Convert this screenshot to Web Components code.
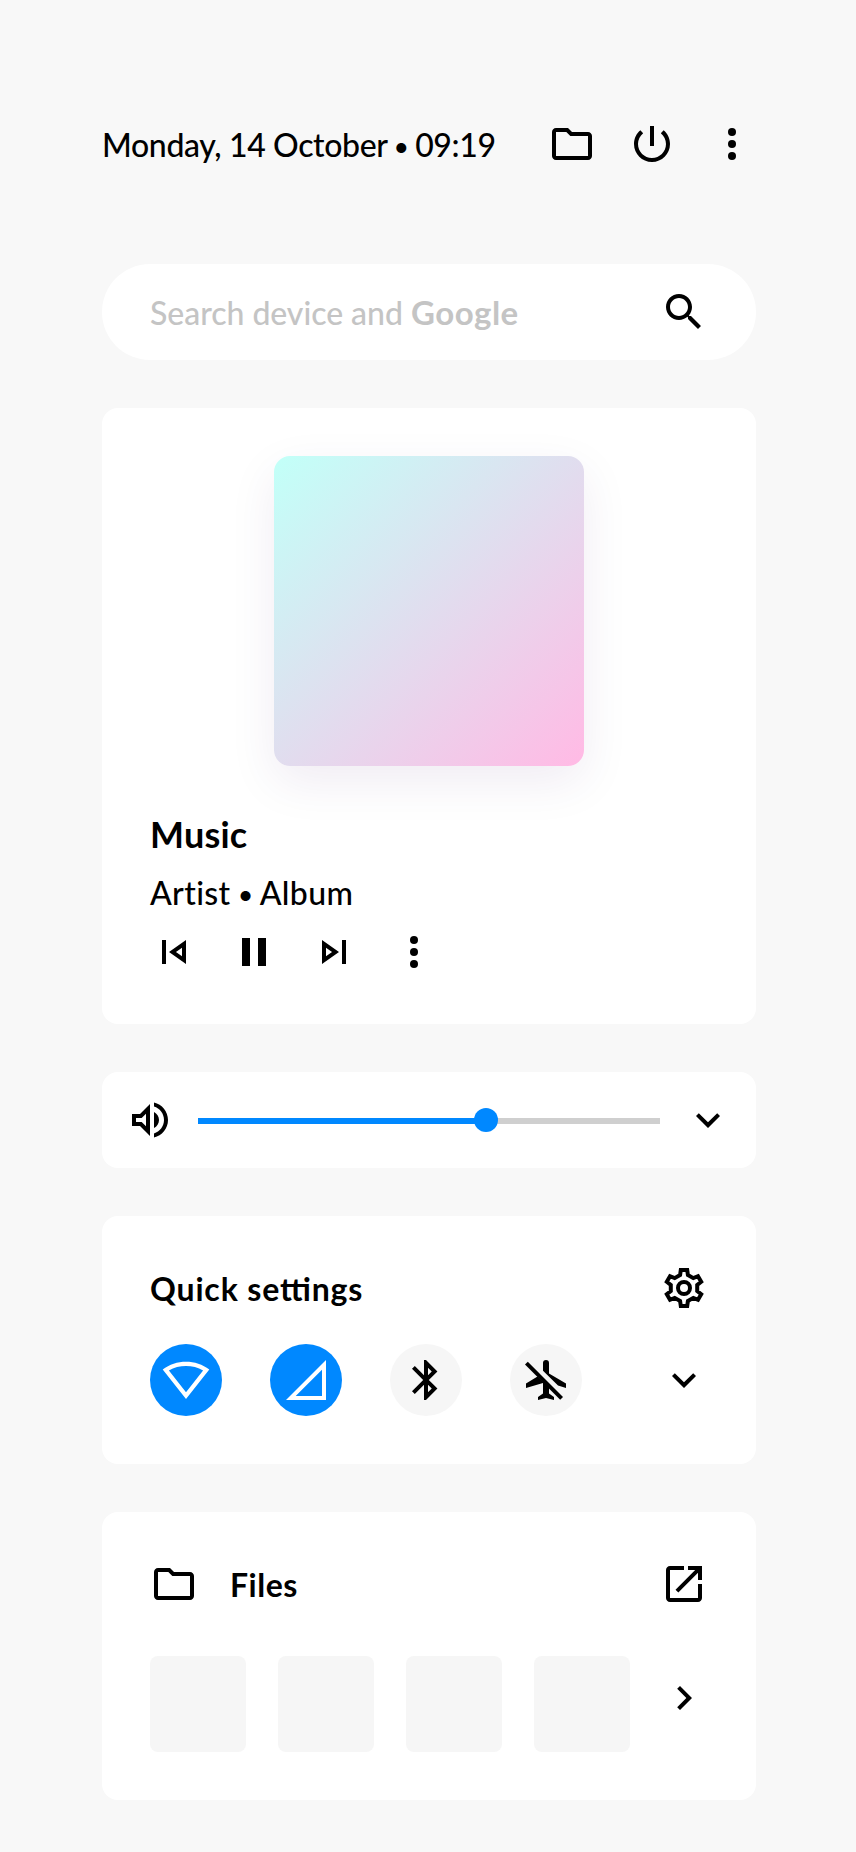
<!DOCTYPE html>
<html lang="en">
<head>
<meta charset="utf-8">
<title>Device panel</title>
<style>
body{margin:0;background:#f8f8f8;color:#000;font-family:Lato,"Open Sans",sans-serif;font-size:32px;font-weight:500}
</style>
</head>
<body>
<device-panel></device-panel>
<script>
// Gear outline: six teeth around a 48px box centre.
const gear = Array.from({length: 6}, (_, i) => {
  const a = i * Math.PI / 3, c = Math.cos(a), s = Math.sin(a);
  return [[-3.9,-13],[-3.2,-18],[3.2,-18],[3.9,-13]].map(([x, y]) =>
    `${(24 + x*c - y*s).toFixed(2)},${(24 + x*s + y*c).toFixed(2)}`).join(' ');
}).join(' ');
const p = d => `<path transform="scale(2)" d="${d}"/>`;
const ICONS = {
  folder: p('M9.17 6l2 2H20v10H4V6h5.17M10 4H4c-1.1 0-2 .9-2 2v12c0 1.1.9 2 2 2h16c1.1 0 2-.9 2-2V8c0-1.1-.9-2-2-2h-8l-2-2z'),
  power: p('M13 3h-2v10h2V3zm4.83 2.17l-1.42 1.42C17.99 7.86 19 9.81 19 12c0 3.87-3.13 7-7 7s-7-3.13-7-7c0-2.19 1.01-4.14 2.58-5.42L6.17 5.17C4.23 6.82 3 9.26 3 12c0 4.97 4.03 9 9 9s9-4.03 9-9c0-2.74-1.23-5.18-3.17-6.83z'),
  more: '<circle cx="24" cy="12" r="4"/><circle cx="24" cy="24" r="4"/><circle cx="24" cy="36" r="4"/>',
  search: p('M15.5 14h-.79l-.28-.27C15.41 12.59 16 11.11 16 9.5 16 5.91 13.09 3 9.5 3S3 5.91 3 9.5 5.91 16 9.5 16c1.61 0 3.09-.59 4.23-1.57l.27.28v.79l5 4.99L20.49 19l-4.99-5zm-6 0C7.01 14 5 11.99 5 9.5S7.01 5 9.5 5 14 7.01 14 9.5 11.99 14 9.5 14z'),
  previous: p('M6 6h2v12H6zm3.5 6l8.5 6V6l-8.5 6zm6.5 2.14L12.97 12 16 9.86v4.28z'),
  pause: p('M6 19h4V5H6v14zm8-14v14h4V5h-4z'),
  next: p('M6 18l8.5-6L6 6v12zM8 9.86L11.03 12 8 14.14V9.86zM16 6h2v12h-2z'),
  volume: p('M3 9v6h4l5 5V4L7 9H3zm7-.17v6.34L7.83 13H5v-2h2.83L10 8.83zM16.5 12c0-1.77-1.02-3.29-2.5-4.03v8.05c1.48-.73 2.5-2.25 2.5-4.02zM14 3.23v2.06c2.89.86 5 3.54 5 6.71s-2.11 5.85-5 6.71v2.06c4.01-.91 7-4.49 7-8.77s-2.99-7.86-7-8.77z'),
  expand: p('M16.59 8.59L12 13.17 7.41 8.59 6 10l6 6 6-6z'),
  chevron: p('M10 6L8.59 7.41 13.17 12l-4.58 4.59L10 18l6-6z'),
  settings: `<g fill="none" stroke="currentColor" stroke-width="4"><polygon points="${gear}"/><circle cx="24" cy="24" r="6"/></g>`,
  wifi: '<path fill-rule="evenodd" d="M.7 13.6C14 3.1 34 3.1 47.3 13.6L24 43zM6.9 14.4C17 8.6 31 8.6 41.1 14.4L24 36.3z"/>',
  signal: '<path fill-rule="evenodd" d="M44 4v40H4zM40 13.7V40H13.7z"/>',
  bluetooth: p('M17.71 7.71L12 2h-1v7.59L6.41 5 5 6.41 10.59 12 5 17.59 6.41 19 11 14.41V22h1l5.71-5.71-4.3-4.29 4.3-4.29zM13 5.83l1.88 1.88L13 9.59V5.83zm1.88 10.46L13 18.17v-3.76l1.88 1.88z'),
  airplane: '<path d="M21 7a3 3 0 0 1 6 0v10.5l17 10v4.5l-8-2.4L21 14.8zM15.5 20.6L4 27.5V32l17-5v10.5l-5 3.5v3l8-2 8 2v-3l-5-3.5V31z"/><path d="M3 8.6L5.8 5.8 41 41l-2.8 2.8z"/>',
  open: p('M19 19H5V5h7V3H5c-1.11 0-2 .9-2 2v14c0 1.1.89 2 2 2h14c1.1 0 2-.9 2-2v-7h-2v7zM14 3v2h3.59l-9.83 9.83 1.41 1.41L19 6.41V10h2V3h-7z')
};

function define(name, html) {
  customElements.define(name, class extends HTMLElement {
    constructor() {
      super();
      this.attachShadow({mode: 'open'}).innerHTML = html;
    }
  });
}

customElements.define('ui-icon', class extends HTMLElement {
  connectedCallback() {
    if (this.shadowRoot) return;
    this.attachShadow({mode: 'open'}).innerHTML =
      `<style>:host{display:block;flex:none;width:48px;height:48px}svg{display:block}</style>
       <svg width="48" height="48" viewBox="0 0 48 48" fill="currentColor" aria-hidden="true">${ICONS[this.getAttribute('name')]}</svg>`;
  }
});

define('ui-card', `
  <style>:host{display:block;box-sizing:border-box;background:#fff;border-radius:16px;padding:48px}</style>
  <slot></slot>`);

define('title-row', `
  <style>
    :host{display:flex;align-items:center;height:48px;line-height:50px;font-weight:700;white-space:nowrap}
    .label{flex:1;height:48px}
    ::slotted([slot=start]){margin-right:32px}
  </style>
  <slot name="start"></slot><div class="label"><slot></slot></div><slot name="end"></slot>`);

define('quick-toggle', `
  <style>
    :host{display:flex;align-items:center;justify-content:center;width:72px;height:72px;border-radius:50%;background:#f6f6f6}
    :host([on]){background:#08f;color:#fff}
  </style>
  <slot></slot>`);

define('status-header', `
  <style>
    :host{display:flex;align-items:center;gap:32px;height:48px;white-space:nowrap}
    .date{flex:1;height:48px;line-height:50px;letter-spacing:-.36px}
    .dot{font-family:Inter,sans-serif;line-height:0;margin:0 -2px}
  </style>
  <div class="date">Monday, 14 October <span class="dot">•</span> 09:19</div>
  <ui-icon name="folder"></ui-icon><ui-icon name="power"></ui-icon><ui-icon name="more"></ui-icon>`);

define('search-bar', `
  <style>
    :host{display:flex;align-items:center;box-sizing:border-box;height:96px;padding:0 48px;border-radius:48px;background:#fff}
    .hint{flex:1;height:48px;line-height:50px;color:#c4c4c4;letter-spacing:-.04px;white-space:nowrap}
    b{font-weight:700;font-size:33px;letter-spacing:.5px;line-height:0}
  </style>
  <div class="hint">Search device and <b>Google</b></div>
  <ui-icon name="search"></ui-icon>`);

define('music-player', `
  <style>
    :host{display:block}
    .art{width:310px;height:310px;margin:0 auto 44px;border-radius:16px;background:linear-gradient(135deg,#c3fff8 2%,#ffbbe5 98%);box-shadow:0 16px 48px rgba(64,0,96,.08)}
    .title{height:48px;line-height:48px;font-size:36px;font-weight:700;letter-spacing:.2px}
    .artist{height:48px;line-height:49px;margin-top:10px;letter-spacing:.36px}
    .dot{font-family:Inter,sans-serif;line-height:0;margin:0 -2px}
    .controls{display:flex;gap:32px;margin-top:12px}
  </style>
  <div class="art"></div>
  <div class="title">Music</div>
  <div class="artist">Artist <span class="dot">•</span> Album</div>
  <div class="controls">
    <ui-icon name="previous"></ui-icon><ui-icon name="pause"></ui-icon><ui-icon name="next"></ui-icon><ui-icon name="more"></ui-icon>
  </div>`);

define('volume-slider', `
  <style>
    :host{display:flex;align-items:center;gap:24px}
    .track{position:relative;flex:1;height:6px;margin-top:2px;background:linear-gradient(to right,#08f 288px,#cfcfcf 288px)}
    .knob{position:absolute;left:276px;top:-10px;width:24px;height:24px;border-radius:50%;background:#08f}
  </style>
  <ui-icon name="volume"></ui-icon>
  <div class="track"><div class="knob"></div></div>
  <ui-icon name="expand"></ui-icon>`);

define('quick-settings', `
  <style>
    :host{display:block}
    .label{letter-spacing:.85px;font-feature-settings:"liga" 1}
    .row{display:flex;align-items:center;gap:48px;margin-top:32px}
    .row > ui-icon{margin-left:auto}
  </style>
  <title-row><span class="label">Quick settings</span><ui-icon slot="end" name="settings"></ui-icon></title-row>
  <div class="row">
    <quick-toggle on><ui-icon name="wifi"></ui-icon></quick-toggle>
    <quick-toggle on><ui-icon name="signal"></ui-icon></quick-toggle>
    <quick-toggle><ui-icon name="bluetooth"></ui-icon></quick-toggle>
    <quick-toggle><ui-icon name="airplane"></ui-icon></quick-toggle>
    <ui-icon name="expand"></ui-icon>
  </div>`);

define('file-shelf', `
  <style>
    :host{display:block}
    .label{letter-spacing:.5px}
    .row{display:flex;gap:32px;margin-top:48px}
    .tile{flex:none;width:96px;height:96px;border-radius:8px;background:#f6f6f6}
    .row > ui-icon{margin:18px 0 0 -2px}
  </style>
  <title-row><ui-icon slot="start" name="folder"></ui-icon><span class="label">Files</span><ui-icon slot="end" name="open"></ui-icon></title-row>
  <div class="row">
    <div class="tile"></div><div class="tile"></div><div class="tile"></div><div class="tile"></div>
    <ui-icon name="chevron"></ui-icon>
  </div>`);

define('device-panel', `
  <style>
    :host{display:flex;flex-direction:column;gap:48px;box-sizing:border-box;height:1852px;padding:120px 100px 0 102px}
    status-header{margin-bottom:48px}
    .volume{padding:24px}
  </style>
  <status-header></status-header>
  <search-bar></search-bar>
  <ui-card><music-player></music-player></ui-card>
  <ui-card class="volume"><volume-slider></volume-slider></ui-card>
  <ui-card><quick-settings></quick-settings></ui-card>
  <ui-card><file-shelf></file-shelf></ui-card>`);
</script>
</body>
</html>
